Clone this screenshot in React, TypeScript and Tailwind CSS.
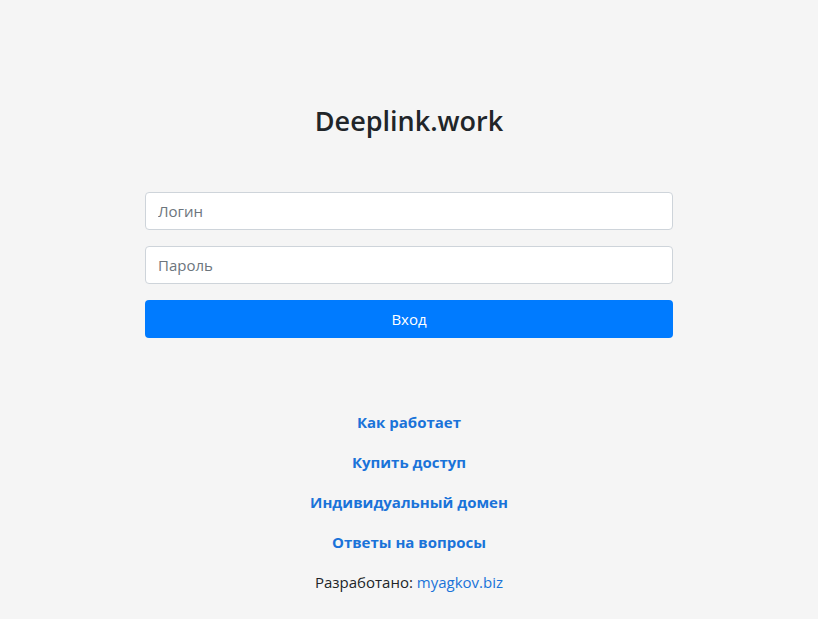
export default function App() {
  return (
    <div
      className="min-h-[619px] bg-[#f5f5f5] text-[#212529]"
      style={{ fontFamily: '"Open Sans", "Noto Sans", sans-serif' }}
    >
      <div className="mx-auto w-[528px] pt-[104px]">
        <h1 className="text-center text-[27px] leading-[34px] font-semibold text-[#212529]">Deeplink.work</h1>
        <form className="mt-[54px] flex flex-col" onSubmit={(e) => e.preventDefault()}>
          <input
            placeholder="Логин"
            className="h-[38px] w-full rounded-[4px] border border-[#ced4da] bg-white px-3 text-[15px] text-[#495057] placeholder:text-[#6c757d] outline-none"
          />
          <input
            type="password"
            placeholder="Пароль"
            className="mt-4 h-[38px] w-full rounded-[4px] border border-[#ced4da] bg-white px-3 text-[15px] text-[#495057] placeholder:text-[#6c757d] outline-none"
          />
          <button
            type="submit"
            className="mt-4 h-[38px] w-full rounded-[4px] bg-[#007bff] text-[15px] text-white"
          >
            Вход
          </button>
        </form>
        <div className="mt-[64px] flex flex-col items-center text-[15px]">
          <a href="#" className="h-[40px] leading-[40px] font-bold text-[#1a73d9]">Как работает</a>
          <a href="#" className="h-[40px] leading-[40px] font-bold text-[#1a73d9]">Купить доступ</a>
          <a href="#" className="h-[40px] leading-[40px] font-bold text-[#1a73d9]">Индивидуальный домен</a>
          <a href="#" className="h-[40px] leading-[40px] font-bold text-[#1a73d9]">Ответы на вопросы</a>
          <div className="h-[40px] leading-[40px] text-[#212529]">
            Разработано: <a href="#" className="text-[#1a73d9]">myagkov.biz</a>
          </div>
        </div>
      </div>
    </div>
  );
}
